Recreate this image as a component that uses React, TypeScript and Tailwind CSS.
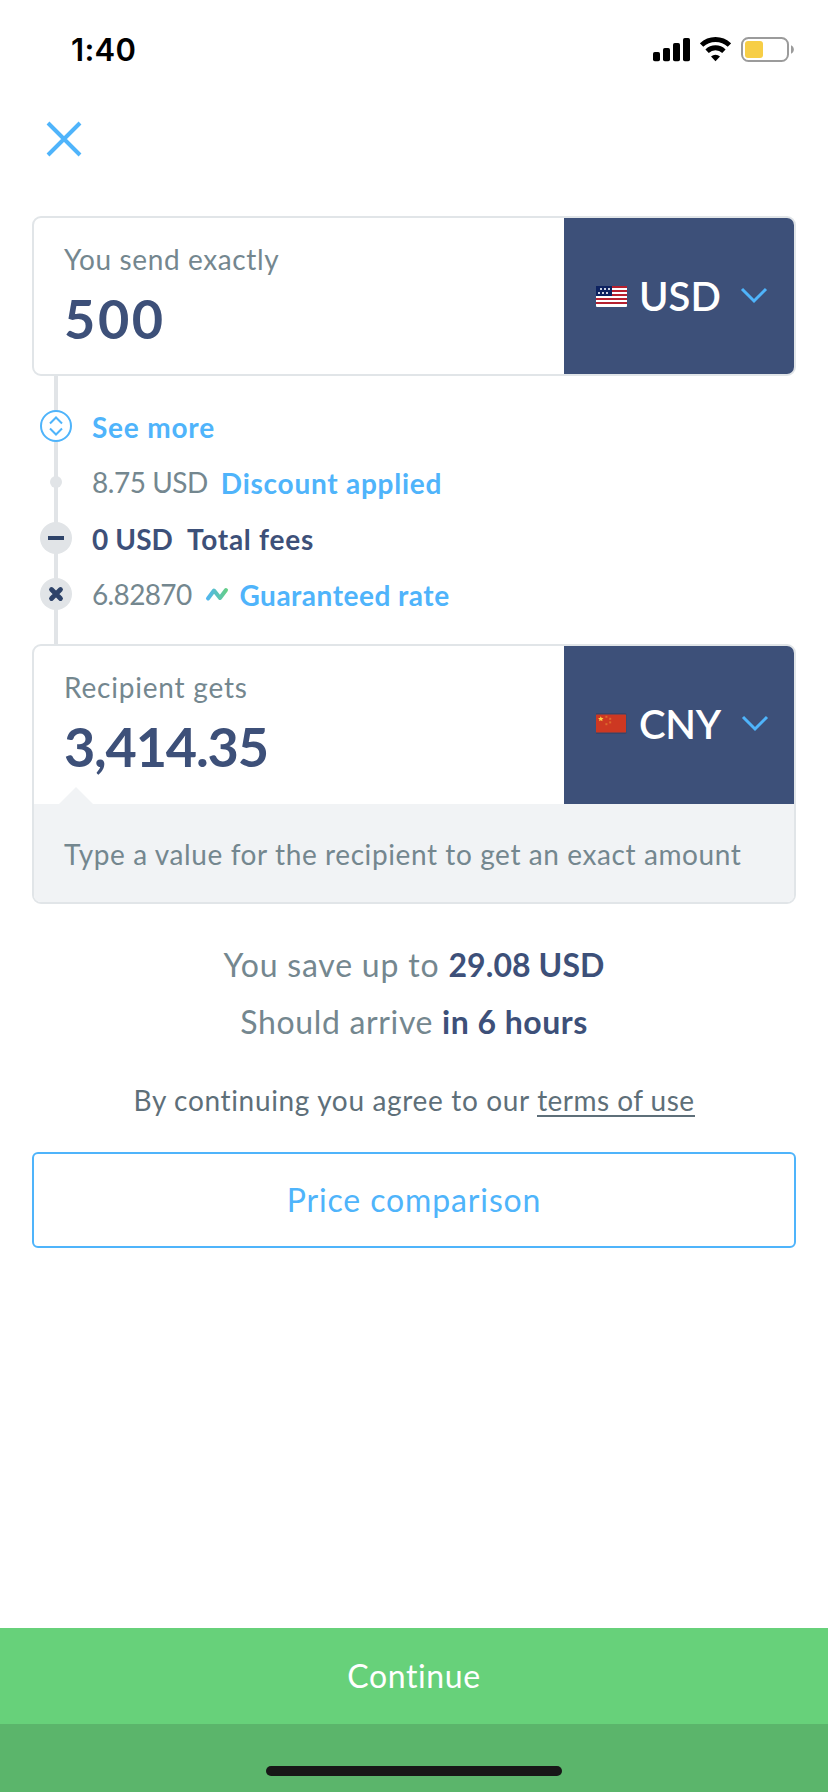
import React from "react";

function StatusBar() {
  return (
    <header className="flex h-[100px] items-start justify-between pl-[71px] pr-[34px] text-black">
      <time className="mt-[30px] font-['Inter'] text-[31px] font-semibold leading-10 tracking-[0.3px]">1:40</time>
      <div className="mt-9 flex items-start gap-[10px]">
        <svg width="37" height="28" viewBox="0 0 37 28" fill="currentColor">
          <rect x="0" y="16" width="7" height="9.3" rx="1.8" />
          <rect x="10" y="12" width="7" height="13.3" rx="1.8" />
          <rect x="20" y="7" width="7" height="18.3" rx="1.8" />
          <rect x="30" y="2" width="7" height="23.3" rx="1.8" />
        </svg>
        <svg width="31" height="28" viewBox="0 0 31 28" fill="none" stroke="currentColor">
          <path d="M1.6 9.1a20 20 0 0 1 27.8 0" strokeWidth="4.8" />
          <path d="M7.1 15.2a12 12 0 0 1 16.8 0" strokeWidth="4.8" />
          <path d="M15.5 25.3 11 20.6a6.6 6.6 0 0 1 9 0z" fill="currentColor" stroke="none" />
        </svg>
        <svg width="53" height="28" viewBox="0 0 53 28">
          <rect x="1" y="2" width="46" height="23" rx="6.5" fill="none" stroke="#9b9b9b" strokeWidth="2" />
          <rect x="4" y="5" width="18" height="17" rx="3" fill="#f7ce46" />
          <path d="M50 9.2c3.8 1.4 3.8 7.2 0 8.6z" fill="#9b9b9b" />
        </svg>
      </div>
    </header>
  );
}

function UsFlag() {
  return (
    <svg width="31" height="21" viewBox="0 0 31 21">
      <rect width="31" height="21" rx="1" fill="#fff" />
      <path d="M0 1h31M0 5h31M0 9h31M0 13h31M0 17h31" stroke="#b6202f" strokeWidth="2" />
      <rect width="16" height="10" fill="#0d2260" />
      <g fill="#c9d0e2">
        <rect x="4" y="2" width="2" height="2" />
        <rect x="8" y="2" width="2" height="2" />
        <rect x="12" y="2" width="2" height="2" />
        <rect x="2" y="6" width="2" height="2" />
        <rect x="6" y="6" width="2" height="2" />
        <rect x="10" y="6" width="2" height="2" />
      </g>
    </svg>
  );
}

function CnFlag() {
  return (
    <svg className="mb-px" width="31" height="21" viewBox="0 0 31 21">
      <rect x="-.5" y="0" width="31" height="21" rx="1.5" fill="#36466a" />
      <rect x="0" y="1.5" width="30" height="18" rx="0.5" fill="#cd3822" />
      <path d="m4.8 3.2.8 1.7 1.9.2-1.4 1.3.4 1.8-1.7-.9-1.7.9.4-1.8-1.4-1.3 1.9-.2z" fill="#f9d348" />
      <g fill="#dd6a2c">
        <rect x="9.4" y="2.8" width="2" height="2" />
        <rect x="13.2" y="4.8" width="2" height="2" />
        <rect x="13.2" y="8.4" width="2" height="2" />
        <rect x="9.4" y="10.2" width="2" height="2" />
      </g>
    </svg>
  );
}

function Chevron({ className }: { className: string }) {
  return (
    <svg className={className} width="28" height="18" viewBox="0 0 28 18" fill="none" stroke="#4fb4fb" strokeWidth="3">
      <path d="m2 2 12 12L26 2" />
    </svg>
  );
}

function Rate() {
  return (
    <svg className="ml-[13px] mr-[11px]" width="24" height="16" viewBox="0 0 24 16" fill="none">
      <defs>
        <linearGradient id="trend" x1="0" y1="0" x2="24" y2="0" gradientUnits="userSpaceOnUse">
          <stop stopColor="#4fb4fb" />
          <stop offset="1" stopColor="#67d17a" />
        </linearGradient>
      </defs>
      <path d="M3 12.5 9 4.5 15 12 21 4" stroke="url(#trend)" strokeWidth="4" strokeLinecap="round" strokeLinejoin="round" />
    </svg>
  );
}

function Step({ marker, children }: { marker: React.ReactNode; children: React.ReactNode }) {
  return (
    <li className="flex h-14 items-center whitespace-nowrap">
      <span className="mr-5 flex w-8 justify-center">{marker}</span>
      {children}
    </li>
  );
}

export default function App() {
  return (
    <div className="flex h-[1792px] w-[828px] flex-col bg-white font-['Lato',sans-serif] text-[28px] leading-9 text-[#74878f]">
      <StatusBar />
      <div className="flex h-[116px] items-start pl-[46px] pt-[21px]">
        <svg width="36" height="36" viewBox="0 0 36 36" stroke="#4fb4fb" strokeWidth="4">
          <path d="m2 2 32 32M34 2 2 34" />
        </svg>
      </div>

      <main className="flex grow flex-col px-8">
        <section className="flex h-40 overflow-hidden rounded-[9px] border-2 border-[#e1e5e8]">
          <div className="flex grow flex-col pl-[30px] pt-[23px]">
            <label className="tracking-[0.62px]">You send exactly</label>
            <strong className="mt-[10px] text-[54px] font-bold leading-[64px] tracking-[2.6px] text-[#3d5079]">500</strong>
          </div>
          <button className="flex w-[230px] items-center bg-[#3d5079] pl-8 text-[40px] font-semibold text-white">
            <UsFlag />
            <span className="ml-[12px]">USD</span>
            <Chevron className="ml-[19px]" />
          </button>
        </section>

        <div className="relative h-[268px] py-[22px] pl-2">
          <div className="absolute left-[22px] top-0 h-full w-1 bg-[#e1e4e7]" />
          <ul className="relative">
            <Step
              marker={
                <svg width="32" height="32" viewBox="0 0 32 32" fill="#fff" stroke="#4fb4fb" strokeWidth="2">
                  <circle cx="16" cy="16" r="15" />
                  <path d="m10 13.5 6-6 6 6M10 18.5l6 6 6-6" />
                </svg>
              }
            >
              <span className="mt-0.5 font-bold tracking-[0.8px] text-[#4fb4fb]">See more</span>
            </Step>
            <Step marker={<span className="h-3 w-3 rounded-full bg-[#e1e4e7]" />}>
              <span className="tracking-[-0.47px]">8.75 USD</span>
              <span className="ml-[13px] mt-0.5 font-bold tracking-[0.75px] text-[#4fb4fb]">Discount applied</span>
            </Step>
            <Step
              marker={
                <svg width="32" height="32" viewBox="0 0 32 32">
                  <circle cx="16" cy="16" r="16" fill="#e1e4e7" />
                  <path d="M8 16h16" stroke="#2e4369" strokeWidth="4" />
                </svg>
              }
            >
              <span className="mt-0.5 font-bold tracking-[0.1px] text-[#3d5079]">0 USD</span>
              <span className="ml-[14px] mt-0.5 font-bold tracking-[0.75px] text-[#3d5079]">Total fees</span>
            </Step>
            <Step
              marker={
                <svg width="32" height="32" viewBox="0 0 32 32">
                  <circle cx="16" cy="16" r="16" fill="#e1e4e7" />
                  <path d="m11.5 11.5 9 9M20.5 11.5l-9 9" stroke="#2e4369" strokeWidth="4.8" strokeLinecap="round" />
                </svg>
              }
            >
              <span className="tracking-[-0.65px]">6.82870</span>
              <Rate />
              <span className="mt-0.5 font-bold tracking-[0.5px] text-[#4fb4fb]">Guaranteed rate</span>
            </Step>
          </ul>
        </div>

        <section className="h-[260px] overflow-hidden rounded-[9px] border-2 border-[#e1e5e8]">
          <div className="flex h-[158px]">
            <div className="relative flex grow flex-col pl-[30px] pt-[23px]">
              <label className="tracking-[0.8px]">Recipient gets</label>
              <strong className="mt-[10px] text-[54px] font-bold leading-[64px] tracking-[-1.2px] text-[#3d5079]">3,414.35</strong>
              <svg className="absolute bottom-0 left-[25px]" width="34" height="17" viewBox="0 0 34 17" fill="#f1f3f5">
                <path d="M0 17 17 0l17 17z" />
              </svg>
            </div>
            <button className="flex w-[230px] items-center bg-[#3d5079] pb-0.5 pl-8 text-[40px] font-semibold text-white">
              <CnFlag />
              <span className="ml-[12px] tracking-[-0.3px]">CNY</span>
              <Chevron className="ml-5" />
            </button>
          </div>
          <p className="flex h-[98px] items-center whitespace-nowrap bg-[#f1f3f5] pl-[30px] pt-0.5 tracking-[0.6px]">
            Type a value for the recipient to get an exact amount
          </p>
        </section>

        <div className="mt-8 text-center text-[32px] leading-[57px]">
          <p>
            <span className="tracking-[0.8px]">You save up to </span>
            <b className="font-bold tracking-[0.1px] text-[#3d5079]">29.08 USD</b>
          </p>
          <p>
            <span className="tracking-[0.65px]">Should arrive </span>
            <b className="font-bold tracking-[0.5px] text-[#3d5079]">in 6 hours</b>
          </p>
        </div>
        <p className="mt-[25px] text-center leading-[50px] text-[#5e6f79]">
          <span className="tracking-[0.66px]">By continuing you agree to our </span>
          <a className="inline-block border-b-2 border-[#5e6f79] leading-[30px] tracking-[0.46px]">terms of use</a>
        </p>
        <button className="mt-[27px] flex h-24 items-center justify-center rounded-md border-2 border-[#4fb4fb] text-[32px] tracking-[0.87px] text-[#4fb4fb]">
          Price comparison
        </button>
      </main>

      <button className="flex h-24 items-center justify-center bg-[#67d17a] text-[32px] tracking-[0.6px] text-white">Continue</button>
      <footer className="flex h-[68px] items-end justify-center bg-[#5bb56b] pb-4">
        <span className="h-2.5 w-[296px] rounded-full bg-[#171717]" />
      </footer>
    </div>
  );
}
